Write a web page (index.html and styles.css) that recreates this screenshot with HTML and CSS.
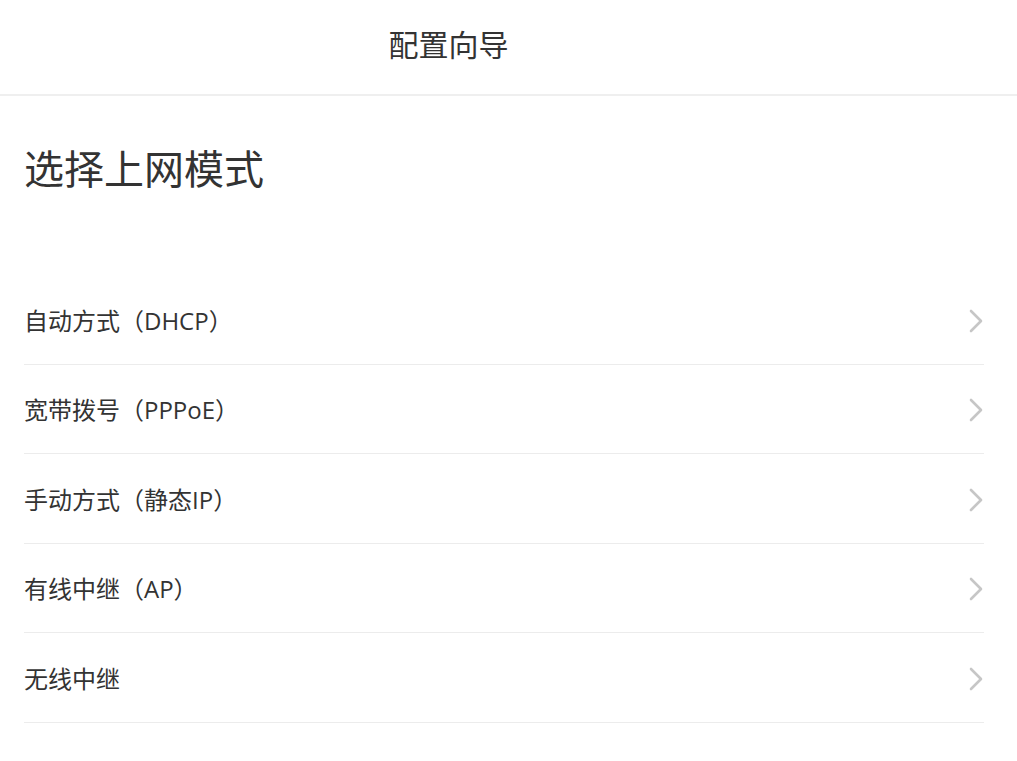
FILE: index.html
```html
<!DOCTYPE html>
<html lang="zh-CN">
<head>
<meta charset="utf-8">
<title>配置向导</title>
<link rel="stylesheet" href="styles.css">
</head>
<body>
<header class="topbar">
  <h1 class="topbar-title">配置向导</h1>
</header>
<main class="content">
  <h2 class="section-title">选择上网模式</h2>
  <ul class="mode-list">
    <li class="mode-item"><span class="mode-label">自动方式（DHCP）</span><svg class="chevron" viewBox="0 0 14 24" width="14" height="24"><path d="M2 2 L12 12 L2 22" fill="none" stroke="#c6c6c6" stroke-width="2.6" stroke-linecap="round" stroke-linejoin="round"/></svg></li>
    <li class="mode-item"><span class="mode-label">宽带拨号（PPPoE）</span><svg class="chevron" viewBox="0 0 14 24" width="14" height="24"><path d="M2 2 L12 12 L2 22" fill="none" stroke="#c6c6c6" stroke-width="2.6" stroke-linecap="round" stroke-linejoin="round"/></svg></li>
    <li class="mode-item"><span class="mode-label">手动方式（静态IP）</span><svg class="chevron" viewBox="0 0 14 24" width="14" height="24"><path d="M2 2 L12 12 L2 22" fill="none" stroke="#c6c6c6" stroke-width="2.6" stroke-linecap="round" stroke-linejoin="round"/></svg></li>
    <li class="mode-item"><span class="mode-label">有线中继（AP）</span><svg class="chevron" viewBox="0 0 14 24" width="14" height="24"><path d="M2 2 L12 12 L2 22" fill="none" stroke="#c6c6c6" stroke-width="2.6" stroke-linecap="round" stroke-linejoin="round"/></svg></li>
    <li class="mode-item"><span class="mode-label">无线中继</span><svg class="chevron" viewBox="0 0 14 24" width="14" height="24"><path d="M2 2 L12 12 L2 22" fill="none" stroke="#c6c6c6" stroke-width="2.6" stroke-linecap="round" stroke-linejoin="round"/></svg></li>
  </ul>
</main>
</body>
</html>
```
FILE: styles.css
```css
html, body {
  margin: 0;
  padding: 0;
  background: #ffffff;
}
body {
  font-family: "Open Sans", "Noto Sans CJK SC", sans-serif;
  color: #333333;
}
.topbar {
  height: 94px;
  border-bottom: 2px solid #efefef;
  display: flex;
  align-items: center;
  justify-content: center;
  padding-right: 120px;
  padding-bottom: 4px;
  box-sizing: content-box;
}
.topbar {
  height: 90px;
}
.topbar-title {
  margin: 0;
  font-size: 30px;
  font-weight: 400;
  line-height: 40px;
  color: #333333;
}
.content {
  padding: 0 33px 0 24px;
}
.section-title {
  margin: 45px 0 0 0;
  font-size: 40px;
  font-weight: 400;
  line-height: 56px;
  color: #333333;
}
.mode-list {
  list-style: none;
  margin: 78px 0 0 0;
  padding: 0;
}
.mode-item {
  box-sizing: border-box;
  height: 89.5px;
  border-bottom: 1px solid #ececec;
  display: flex;
  align-items: center;
  justify-content: space-between;
  padding-top: 3px;
}
.mode-label {
  font-size: 24px;
  line-height: 32px;
  color: #333333;
}
.chevron {
  display: block;
  margin-right: 1px;
}
```
